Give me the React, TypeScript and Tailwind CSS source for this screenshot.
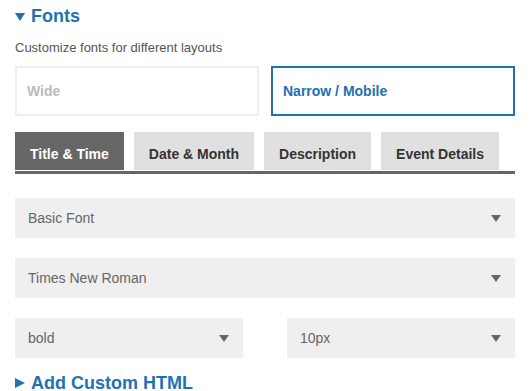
import React, { useState } from "react";

const tabs = ["Title & Time", "Date & Month", "Description", "Event Details"];

function Arrow() {
  return (
    <svg width="10" height="7" viewBox="0 0 10 7" className="shrink-0">
      <path d="M0 0 H10 L5 7 Z" fill="#666" />
    </svg>
  );
}

function Select({ value, className }: { value: string; className?: string }) {
  return (
    <div
      className={
        "flex h-[40px] items-center justify-between bg-[#efefef] pl-[13px] pr-[14px] text-[14px] text-[#666] " +
        (className ?? "")
      }
    >
      <span>{value}</span>
      <Arrow />
    </div>
  );
}

export default function App() {
  const [layout, setLayout] = useState("narrow");
  const [tab, setTab] = useState(0);

  return (
    <div className="h-[391px] w-[530px] overflow-hidden bg-white px-[15px] font-['Liberation_Sans',Arial,sans-serif]">
      <div className="flex h-[32px] items-center gap-[6px] pt-[1px] text-[18px] font-bold text-[#2271b1]">
        <svg width="10" height="8" viewBox="0 0 10 8">
          <path d="M0 0 H10 L5 8 Z" fill="#2271b1" />
        </svg>
        <span>Fonts</span>
      </div>
      <p className="mt-[8px] text-[13px] leading-[16px] text-[#555]">
        Customize fonts for different layouts
      </p>

      <div className="mt-[10px] grid grid-cols-2 gap-[12px]">
        <button
          onClick={() => setLayout("wide")}
          className={
            "flex h-[50px] items-center border-2 px-[10px] text-left text-[14px] font-bold " +
            (layout === "wide"
              ? "border-[#2271b1] text-[#2271b1]"
              : "border-[#eeeeee] text-[#bbbbbb]")
          }
        >
          Wide
        </button>
        <button
          onClick={() => setLayout("narrow")}
          className={
            "flex h-[50px] items-center border-2 px-[10px] text-left text-[14px] font-bold " +
            (layout === "narrow"
              ? "border-[#2271b1] text-[#2271b1]"
              : "border-[#eeeeee] text-[#bbbbbb]")
          }
        >
          Narrow / Mobile
        </button>
      </div>

      <div className="mt-[16px] flex gap-[10px] border-b-[3px] border-[#666]">
        {tabs.map((t, i) => (
          <button
            key={t}
            onClick={() => setTab(i)}
            className={
              "flex h-[38px] items-center px-[15px] pt-[6px] text-[14px] font-bold " +
              (tab === i
                ? "bg-[#666] text-white"
                : "mb-[1px] h-[37px] bg-[#e0e0e0] text-[#333]")
            }
          >
            {t}
          </button>
        ))}
      </div>

      <div className="mt-[24px] flex flex-col gap-[20px]">
        <Select value="Basic Font" />
        <Select value="Times New Roman" />
        <div className="flex justify-between">
          <Select value="bold" className="w-[228px]" />
          <Select value="10px" className="w-[228px]" />
        </div>
      </div>

      <div className="mt-[14px] flex items-center gap-[6px] text-[18px] font-bold leading-[22px] text-[#2271b1]">
        <svg width="10" height="10" viewBox="0 0 10 10">
          <path d="M0 0 L10 5 L0 10 Z" fill="#2271b1" />
        </svg>
        <span>Add Custom HTML</span>
      </div>
    </div>
  );
}
